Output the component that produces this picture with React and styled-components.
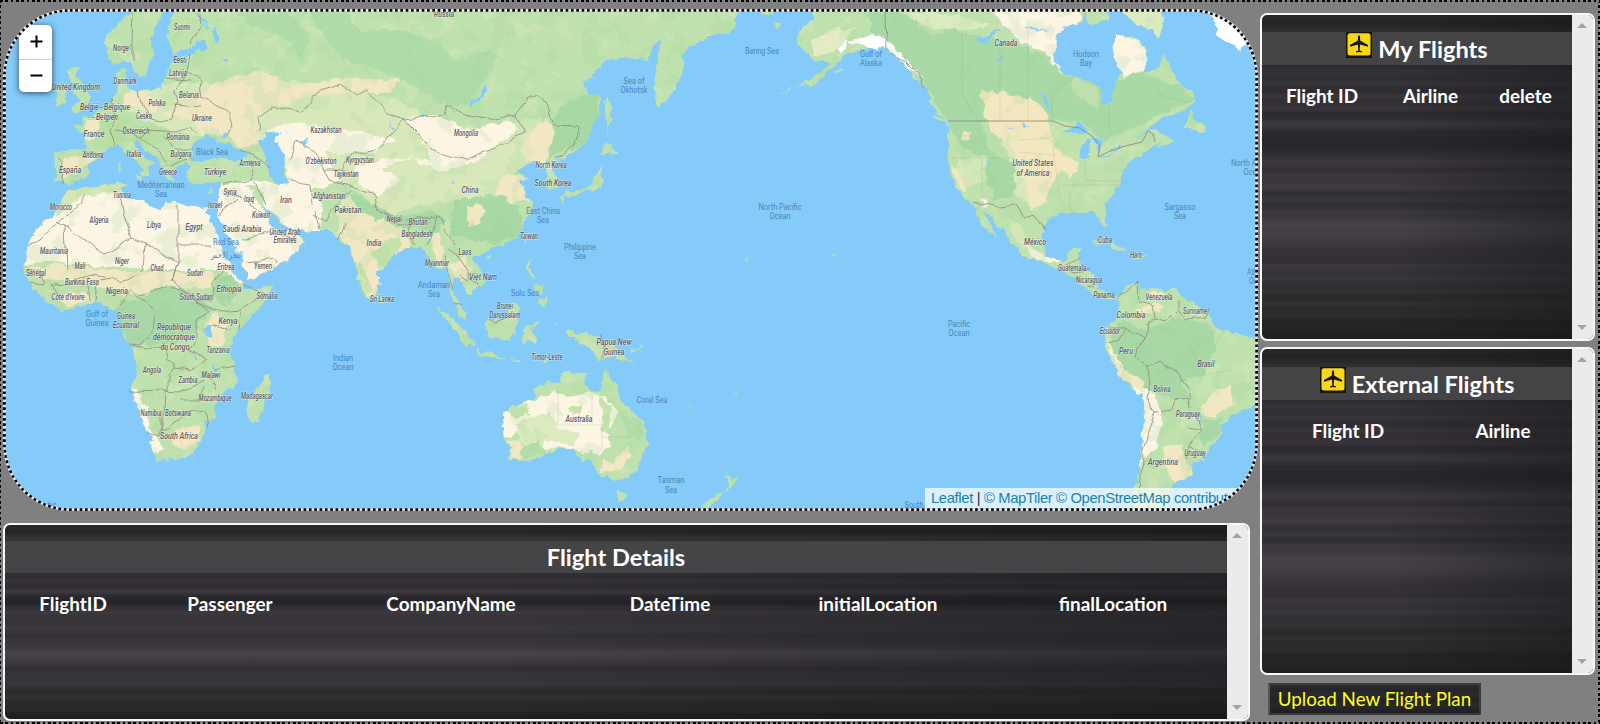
import React from "react";
import styled, { createGlobalStyle } from "styled-components";

const GlobalStyle = createGlobalStyle`
  body { margin: 0; background: #808080; overflow: hidden; }
  * { box-sizing: border-box; }
`;

const dots = (dir) => `repeating-linear-gradient(${dir}, #000 0 2.67px, #808080 2.67px 5.33px)`;

const Frame = styled.div`
  display: flex;
  width: 1600px;
  height: 724px;
  padding: 9px 5px 3px 3px;
  gap: 2px;
  font-family: Lato, "Liberation Sans", sans-serif;
  color: #fff;
  background:
    ${dots("to right")} 0 0 / 100% 2px no-repeat,
    ${dots("to right")} 0 100% / 100% 2px no-repeat,
    ${dots("to bottom")} 0 0 / 1px 100% no-repeat,
    ${dots("to bottom")} 100% 0 / 2px 100% no-repeat,
    #808080;
`;
const LeftColumn = styled.div`
  display: flex;
  flex-direction: column;
  width: 1255px;
  gap: 12px;
`;
const RightColumn = styled.div`
  display: flex;
  flex-direction: column;
  align-items: flex-start;
  width: 335px;
  padding-top: 4px;
  gap: 6px;
`;

const MapBox = styled.div`
  position: relative;
  flex: none;
  height: 502px;
  border-radius: 67px;
  overflow: hidden;
`;
const MapDrawing = styled.svg`
  display: block;
  width: 1255px;
  height: 502px;
`;
const MapEdge = styled.svg`
  position: absolute;
  inset: 0;
  width: 1255px;
  height: 502px;
  pointer-events: none;
`;
const ZoomControl = styled.div`
  position: absolute;
  left: 16px;
  top: 16px;
  width: 33px;
  border-radius: 5px;
  background: #fff;
  box-shadow: 0 1px 6px rgba(0, 0, 0, 0.65);
`;
const ZoomButton = styled.div`
  display: flex;
  align-items: center;
  justify-content: center;
  height: 33.5px;
  padding-left: 1px;
  & + & { border-top: 1px solid #ccc; }
`;
const Attribution = styled.div`
  position: absolute;
  right: 3px;
  bottom: 3px;
  height: 20px;
  padding: 0 6px;
  background: rgba(255, 255, 255, 0.7);
  font: 14.8px/20px "Liberation Sans", Arial, sans-serif;
  letter-spacing: -0.36px;
  color: #333;
  white-space: nowrap;
  width: 330px;
`;
const Credit = styled.a`color: #1a82b0;`;

const streaks = `
  linear-gradient(to right, rgba(20,20,22,0) 40%, rgba(20,20,22,0.5) 100%),
  repeating-linear-gradient(to bottom, rgba(0,0,0,0) 0, rgba(0,0,0,0.1) 7px, rgba(0,0,0,0) 12px, rgba(0,0,0,0.05) 17px, rgba(0,0,0,0) 23px),
  repeating-linear-gradient(to bottom, rgba(255,245,255,0) 0, rgba(255,245,255,0.025) 3px, rgba(255,245,255,0) 7px, rgba(255,245,255,0) 13px),
  linear-gradient(to bottom,
    #252527 0%, #29292b 4%, #363538 7%, #2b2b2d 9%, #303033 15%, #333136 20%,
    #363238 28%, #302e33 32%, #3d3940 34%, #2d2b30 36%, #27262a 41%, #3f3b41 45%,
    #343136 48%, #403c42 52%, #343137 55%, #38353b 61%, #4a464c 66%, #3d393f 70%,
    #343136 75%, #3a373d 80%, #2f2e31 85%, #2d2d30 91%, #242426 96%, #202022 100%)`;

const Panel = styled.section`
  display: flex;
  flex: none;
  width: ${(p) => p.$w}px;
  height: ${(p) => p.$h}px;
  border: 2px solid #f8f8f8;
  border-radius: 7px;
  overflow: hidden;
  background: ${streaks};
`;
const PanelBody = styled.div`
  flex: 1;
  min-width: 0;
  padding-top: ${(p) => p.$top}px;
`;
const PanelTitle = styled.h2`
  display: flex;
  justify-content: center;
  gap: 6px;
  height: ${(p) => p.$h}px;
  margin: 0;
  background: #444446;
  font-size: 23.6px;
  line-height: ${(p) => p.$lh}px;
  font-weight: 700;
`;
const HeaderRow = styled.div`
  display: grid;
  grid-template-columns: ${(p) => p.$cols};
  padding-top: 19px;
  font-size: 18.9px;
  line-height: 24px;
  font-weight: 700;
  text-align: center;
`;
const ScrollTrack = styled.div`
  display: flex;
  flex-direction: column;
  justify-content: space-between;
  width: 21px;
  padding: 8px 0 9px 5px;
  background: #ebebeb;
`;
const Arrow = styled.i`
  width: 0;
  border: 5px solid transparent;
  border-top: ${(p) => (p.$down ? "5px solid #a3a3a3" : "0")};
  border-bottom: ${(p) => (p.$down ? "0" : "5px solid #a3a3a3")};
`;
const UploadButton = styled.button`
  width: 213px;
  height: 32px;
  margin: 2px 0 0 8px;
  padding: 0;
  border: 2px solid;
  border-color: #3c3c3f #3c3c3f #39393c #55555a;
  background: linear-gradient(#2c2b2e, #252427 20%, #2c2a2e 32%, #232225 55%, #2a292c 70%, #1f1f21);
  color: #ffff1a;
  font: 400 18.8px/24px Lato, sans-serif;
  white-space: nowrap;
`;

const PlaneIcon = () => (
  <svg width="26" height="26" viewBox="0 0 26 26">
    <rect width="26" height="26" fill="#17150c" />
    <rect x="1.5" y="1.2" width="23" height="22.4" rx="2.5" fill="#f7d716" />
    <path d="M13 3.2c-.8 0-1.1 1.2-1.1 2.4v3L4 13v1.7l8-2.2.3 6-2.3 1v.9l3-.5 3 .5v-.9l-2.3-1 .3-6 8 2.2V13l-7.9-4.4v-3c0-1.2-.3-2.4-1.1-2.4z" fill="#15130a" />
  </svg>
);

/* Coastlines, clockwise from the Atlantic coast of Spain */
const LAND = [
  "55,152 56,163 55,180 62,183 66,185 80,180 88,172 90,163 101,155 108,148 118,145 127,152 137,161 144,168 142,177 147,175 149,167 155,165 148,159 140,152 134,147 133,141 139,140 145,149 155,156 161,163 164,172 168,181 175,181 173,173 178,167 187,164 190,167 185,172 188,182 200,184 212,183 221,181 219,190 217,205 219,220 228,235 240,255 246,272 246,280 255,277 275,268 290,258 300,247 305,241 298,234 292,230 282,233 273,225 265,213 263,207 270,213 280,222 292,228 300,231 318,231 332,231 340,241 348,247 353,250 354,262 358,280 364,295 370,299 376,295 379,285 379,272 388,262 398,252 410,247 420,247 427,255 431,262 435,266 442,270 446,268 449,280 450,292 452,300 458,312 466,321 466,312 459,303 455,298 452,285 454,277 460,279 467,290 471,294 480,287 485,280 480,268 473,258 480,252 488,250 500,246 515,238 525,225 531,212 530,200 522,190 520,180 528,180 522,178 517,172 525,165 535,163 545,170 548,182 549,190 556,190 557,178 551,170 558,160 570,153 580,148 592,130 598,115 602,100 600,93 590,95 582,88 595,72 605,60 630,58 648,60 655,45 661,38 657,60 655,98 660,108 668,98 676,85 685,70 683,55 690,45 705,40 722,35 736,30 735,20 742,5 175,5 168,28 168,45 175,52 185,50 203,43 195,54 185,57 173,60 165,77 163,88 150,90 133,92 126,83 126,72 120,70 116,80 118,93 110,104 100,110 90,117 82,118 83,127 72,125 84,133 86,148 72,150",
  "130,5 127,14 120,22 110,33 106,45 108,58 115,65 126,60 132,65 138,78 144,78 148,68 153,52 151,38 158,22 168,5",
  "72,64 80,68 76,75 80,80 85,92 90,100 88,108 75,114 72,108 80,100 73,92 72,85 68,72", "56,90 65,88 66,103 54,107",
  "68,190 64,196 58,205 50,217 38,226 30,240 27,250 26,265 25,275 33,287 42,298 55,307 62,311 75,308 90,304 103,303 113,311 120,312 121,325 122,335 129,341 133,346 137,365 135,378 131,388 133,400 140,412 143,425 150,437 155,452 158,461 170,459 185,458 195,448 205,435 206,424 217,416 216,402 225,392 236,385 235,368 231,352 230,345 238,330 255,314 268,297 274,283 272,285 258,289 245,290 243,284 236,276 232,270 225,255 216,232 207,215 205,210 213,207 200,208 190,206 178,203 165,202 160,210 150,207 138,200 125,198 122,190 125,183 112,182 90,187 75,188",
  "267,372 271,385 265,405 258,422 250,422 246,412 249,397 258,387",
  "435,307 446,313 460,325 473,340 474,347 466,345 455,333 447,320", "474,349 490,353 505,358 500,359 480,355",
  "487,318 495,322 505,315 512,304 520,308 518,320 515,328 510,340 500,338 490,337 485,325",
  "522,330 530,325 543,322 530,328 535,337 534,345 527,338 524,347", "527,264 532,258 530,272 537,280 528,275", "538,300 547,295 546,304 540,303", "510,359 520,360 519,362", "540,362 552,356 546,362", "534,284 538,288 545,285 543,293 537,294",
  "566,330 575,330 578,336 588,333 600,338 612,345 625,355 634,365 620,360 610,358 598,360 592,350 580,342 570,338", "630,349 638,348 642,342 641,348 633,351", "556,321 558,327 555,325",
  "502,415 512,406 532,400 535,390 550,380 560,384 562,375 570,371 580,372 586,373 583,382 590,389 600,392 604,375 607,367 612,382 617,388 620,400 632,410 642,420 646,432 646,442 640,462 634,475 622,480 610,478 600,476 596,468 588,458 582,462 575,450 560,448 545,452 535,460 520,461 508,460 510,450 503,432",
  "616,491 627,492 624,502 619,502", "719,463 726,475 737,478 730,488 725,492 728,480", "723,490 718,500 708,507 700,512 706,502",
  "606,142 612,147 620,152 612,154 606,156 600,153", "602,163 604,172 600,187 588,190 575,195 565,198 568,192 582,190 592,182 599,172", "562,196 566,198 565,205 561,202",
  "606,95 611,108 613,120 609,122 607,135 606,120 605,105", "527,233 529,236 525,243", "380,293 385,300 382,305 378,300", "484,255 491,254 489,259",
  "119,163 122,163 121,172 118,172", "134,177 143,177 142,181", "166,185 175,186 172,187", "206,191 212,189 210,192",
  "815,5 812,20 800,30 795,38 803,50 815,60 830,62 820,73 808,82 798,88 815,84 833,66 848,55 858,50 870,48 882,48 893,54 903,64 915,77 925,88 932,105 945,120 950,127 948,135 947,155 950,170 957,188 970,202 975,212 983,225 998,239 990,222 983,206 990,215 1005,235 1017,248 1025,256 1040,262 1055,267 1060,268 1072,277 1085,284 1090,293 1105,299 1117,300 1108,293 1098,289 1095,275 1080,270 1078,262 1082,248 1070,250 1065,260 1052,260 1045,250 1043,228 1048,218 1065,213 1080,212 1092,212 1100,220 1105,230 1106,218 1103,205 1115,192 1122,180 1123,168 1135,159 1143,152 1160,144 1155,149 1178,139 1168,138 1160,132 1150,130 1138,138 1150,125 1165,117 1180,112 1195,103 1194,92 1180,85 1172,72 1170,65 1164,52 1160,65 1150,73 1144,72 1146,50 1140,40 1130,35 1115,35 1114,60 1121,72 1115,85 1111,100 1105,107 1100,85 1080,78 1060,70 1053,55 1057,35 1068,25 1080,22 1090,5",
  "1085,5 1087,25 1100,22 1108,20 1102,5", "1115,5 1130,18 1150,30 1160,38 1163,30 1162,5", "932,112 943,119 949,127 938,120",
  "1193,108 1195,118 1206,128 1205,133 1190,128 1184,128", "1092,243 1105,239 1125,250 1118,251 1108,245", "1128,252 1150,257 1135,259", "743,260 747,260 745,257 742,260", "830,253 834,255 832,257",
  "1117,300 1122,290 1137,283 1142,290 1150,288 1175,290 1185,300 1200,307 1212,318 1215,328 1230,332 1245,337 1265,338 1265,392 1250,408 1235,415 1223,422 1222,432 1208,450 1203,460 1192,461 1191,470 1192,475 1180,480 1172,485 1167,500 1165,515 1131,515 1133,490 1140,470 1142,445 1144,420 1143,395 1130,388 1120,375 1112,360 1103,345 1105,335 1108,325 1118,318",
  "733,394 738,392 738,394", "687,403 695,408 691,407",
  "780,93 787,89 795,86 790,90", "800,84 808,80 806,84", "767,7 773,17 760,14", "773,24 782,26 777,28", "836,70 843,69 838,73",
];

/* [colour, outline] of terrain areas */
const TERRAIN = [
  ["#b1dcaa", "310,12 345,12 360,30 410,30 440,45 455,60 490,50 498,55 485,80 465,105 440,105 420,90 390,75 350,62 330,45 320,30"],
  ["#b1dcaa", "235,12 290,12 310,40 300,60 285,35 255,28"],
  ["#a8d9a5", "590,95 600,90 598,120 580,148 565,150 545,160 545,130 558,110 570,100"],
  ["#d8e8ba", "162,85 200,82 230,90 270,78 330,88 400,100 430,120 480,128 520,120 540,118 548,150 510,175 520,200 500,210 440,200 390,215 340,180 300,150 262,142 230,135 200,135 165,130 125,110 130,92"],
  ["#f1e7c3", "175,98 205,92 225,78 255,72 280,76 275,90 310,85 340,78 400,80 390,95 350,92 320,95 262,108 258,130 262,145 240,148 228,135 200,135 195,120 165,115"],
  ["#f1e7c3", "125,95 140,92 160,100 155,112 140,108 125,105"],
  ["#f1e7c3", "85,122 105,115 108,125 95,140 85,140"], ["#f1e7c3", "60,160 80,154 95,160 80,172 62,178"],
  ["#b8dfa4", "100,120 120,118 148,125 170,130 165,142 145,148 125,140 105,150 95,145"],
  ["#fcf5e3", "268,130 290,122 330,128 365,132 395,140 375,150 340,155 325,150 330,165 345,180 310,190 322,205 320,232 290,228 265,207 262,190 240,182 250,180 280,185 290,180 285,165 278,152"],
  ["#fcf5e3", "219,185 245,182 262,208 285,230 308,240 300,256 270,270 247,282 238,262 217,225 218,200"],
  ["#fcf5e3", "405,118 440,116 470,130 510,120 520,130 495,145 480,160 440,172 410,158 380,168 400,180 380,195 360,185 355,168 385,158 430,160 425,145"],
  ["#f1e7c3", "535,130 548,118 555,135 545,160 555,168 540,170 520,150"],
  ["#f1e7c3", "505,175 530,175 530,200 500,205 495,190"],
  ["#f1e7c3", "336,205 350,195 375,210 405,230 410,247 385,260 378,295 366,295 355,260 340,238"],
  ["#c5e3aa", "385,240 400,235 400,248 380,270 372,255"], ["#c5e3aa", "365,290 358,265 361,262 372,290"],
  ["#a8d8a5", "348,190 370,203 400,218 430,210 445,220 438,235 425,230 395,227 360,210"],
  ["#a8d8a5", "455,200 500,195 525,215 520,235 495,245 470,240 450,235 452,215"],
  ["#f1e7c3", "466,207 482,204 486,210 477,224 467,225"], ["#f1e7c3", "450,265 465,258 472,270 462,280 453,275"],
  ["#f1e7c3", "430,235 440,232 442,260 436,265"],
  ["#fcf5e3", "20,265 30,230 60,205 90,190 125,180 140,197 165,200 215,205 230,250 242,270 240,285 225,270 170,270 100,266 50,262"],
  ["#d5e7b6", "60,192 85,187 125,182 125,190 100,195 80,197 65,212 55,215"],
  ["#f1e7c3", "30,268 60,265 110,270 180,273 212,272 210,288 170,290 130,295 98,288 60,280 35,278"],
  ["#f1e7c3", "45,290 60,295 85,292 95,300 65,306"],
  ["#a8d8a5", "115,320 120,300 140,300 150,290 175,285 200,300 215,310 200,320 195,335 165,345 130,345 122,330"],
  ["#a8d8a5", "215,275 232,275 240,290 225,305 212,295"],
  ["#f1e7c3", "205,325 215,313 228,325 222,345 208,345"],
  ["#fcf5e3", "128,388 140,392 147,410 150,430 165,450 155,452 144,430 132,402"], ["#f1e7c3", "175,430 200,425 200,440 185,450 170,445"],
  ["#fcf5e3", "500,415 518,405 540,397 555,393 575,396 590,392 606,400 617,412 615,425 605,430 610,445 603,455 590,450 580,452 560,446 540,452 535,440 515,432 505,440"],
  ["#dcebbf", "515,425 535,415 548,412 560,430 580,432 575,445 550,440 535,455 520,440"], ["#c4e4ab", "508,408 528,404 530,415 515,417"],
  ["#c4e4ab", "568,408 582,404 582,414 572,416"], ["#c4e4ab", "598,395 612,410 608,430 600,430 603,415"],
  ["#f1e7c3", "508,442 520,440 523,458 512,461"], ["#f1e7c3", "612,462 628,445 630,455 620,470 600,472 602,462"],
  ["#b3dda8", "520,448 540,440 545,452 525,460"], ["#b3dda8", "620,415 640,420 644,440 630,435"],
  ["#a9d9a7", "870,12 900,12 950,30 1000,40 1045,55 1060,72 1100,85 1120,80 1140,72 1180,85 1195,100 1150,120 1105,140 1080,122 1045,120 1000,90 985,95 985,125 950,125 920,80 895,50 870,30"],
  ["#bfe0ac", "905,12 945,12 945,35 930,35"], ["#bfe0ac", "1078,78 1098,88 1100,108 1082,100 1070,85"],
  ["#fcf5e3", "985,5 1075,5 1080,20 1060,38 1058,55 1062,73 1045,52 1020,42 1010,30"], ["#fcf5e3", "1110,32 1145,42 1148,70 1125,75 1113,60"],
  ["#dcebbf", "1112,5 1165,5 1165,40 1130,20"], ["#dcebbf", "900,12 945,12 990,25 970,30 930,28"],
  ["#f3e7bf", "981,90 1005,92 1030,98 1045,112 1050,125 1055,145 1080,165 1072,178 1060,170 1045,200 1030,210 1025,190 1015,170 1008,145 990,130 984,110"],
  ["#d8e8ba", "1000,140 1010,135 1020,170 1030,205 1018,195 1012,165"],
  ["#c5e4ad", "1055,120 1080,128 1085,140 1110,150 1100,165 1080,160 1062,155"],
  ["#a8d8a5", "950,125 980,125 990,150 1015,165 1015,195 995,200 985,175 990,160 970,150 955,140"],
  ["#d3e8b6", "958,158 985,158 985,180 960,190 955,178"], ["#f1e7c3", "952,165 957,168 966,188 962,190"],
  ["#f1e7c3", "963,132 972,132 970,140 962,140"], ["#fcf5e3", "980,197 987,204 984,208"],
  ["#fff", "845,42 860,38 875,35 890,42 905,58 925,80 918,75 895,58 880,50"], ["#fff", "838,48 846,40 848,46 840,56"],
  ["#e5ecc5", "810,40 830,30 855,28 845,40 830,55 815,55"],
  ["#d3e8b6", "1005,215 1025,230 1030,245 1045,258 1040,262 1018,245"], ["#fcf5e3", "1020,240 1045,255 1062,260 1055,264 1035,258"],
  ["#a8d8a5", "1118,320 1145,330 1175,318 1210,325 1215,345 1205,375 1180,380 1190,400 1165,398 1145,390 1125,375 1110,345"],
  ["#fcf5e3", "1103,340 1112,348 1125,372 1145,385 1155,400 1160,420 1152,450 1145,460 1140,470 1142,400"], ["#f1e7c3", "1105,338 1120,368 1145,380 1145,393 1120,380"],
  ["#f1e7c3", "1135,310 1155,302 1165,308 1140,315"], ["#f1e7c3", "1145,293 1170,293 1165,300 1150,300"],
  ["#f1e7c3", "1215,390 1232,385 1232,405 1215,415 1200,415 1205,402"], ["#f1e7c3", "1165,445 1180,445 1185,460 1192,475 1175,482 1165,468"],
  ["#a8d8a5", "1205,420 1222,418 1220,432 1205,445 1198,435"],
  ["#fcf5e3", "1155,400 1162,410 1160,430 1156,450 1148,455 1150,430"],
];

const WATER = [
  "193,150 197,141 205,136 213,138 216,144 222,142 230,142 240,150 248,157 235,161 215,158 200,162 192,160",
  "220,137 229,130 226,137", "259,140 270,132 280,133 276,142 285,155 284,170 290,183 278,186 268,172 265,155",
  "199,12 200,20 209,30 205,20", "195,40 207,42 207,50 200,50", "212,28 218,32 219,42 214,40", "224,58 229,60 228,65",
  "300,142 308,139 307,146 303,144", "486,82 488,88 480,100 470,107 468,105 480,95", "424,113 427,116 423,117", "391,122 394,128 392,129", "365,155 374,155 368,157", "452,181 455,184 451,183", "453,107 455,110 453,112",
  "204,327 212,326 212,336 205,337", "193,352 196,358 194,362", "212,362 215,370 213,378", "600,440 603,441",
  "1065,133 1078,122 1088,130 1080,134 1070,134", "1082,142 1092,137 1090,150 1087,160 1079,157", "1092,137 1104,140 1102,148 1098,153", "1097,158 1112,152 1110,155", "1108,150 1122,146 1120,149",
  "1040,92 1045,98 1050,110 1044,106", "975,40 995,32 1003,28 985,43", "1025,25 1040,30 1050,28 1038,33", "995,60 1007,56 1003,61", "1007,127 1014,128 1012,130", "1022,125 1030,128 1024,128", "985,158 991,162 987,166",
  "1138,281 1141,289 1138,293", "1144,384 1148,386 1147,389", "1200,415 1203,420 1201,424",
];

const FRONTIERS = [
  "58,158 63,162 62,182", "82,151 105,157", "112,98 115,118 110,130 115,145", "138,90 142,108 150,118 170,122 176,105 173,90", "115,130 140,138 150,130 175,132 190,128 195,135", "140,138 158,152 165,160", "165,138 175,148 192,148", "163,165 178,162 190,160", "133,12 132,40 132,62", "197,12 202,25 190,46", "190,55 187,70 200,82 202,98 230,112 234,125 228,133", "165,78 190,80", "174,105 200,107", "172,93 180,85 187,72",
  "240,150 262,160 270,168", "250,160 253,180 240,182 222,183", "222,190 240,195 232,203 217,215", "240,195 250,205 265,213", "255,182 265,205", "242,240 270,232 292,240 300,230", "246,262 275,258 280,262", "315,210 318,232", "291,182 310,185 312,205", "260,130 258,118 275,106 300,112 312,105 312,95 340,84 355,95 368,90 388,115 405,120 392,132 380,148 350,155 342,170 325,170 315,150 295,140 290,160", "325,170 330,180 345,185 375,195 378,210 400,220 440,215 448,235 455,245", "405,120 445,115 448,104 465,115 490,120 515,115 528,98 540,95 550,110 555,125 578,126 575,145 555,158", "405,120 420,135 430,150 465,160 495,148 525,132 515,115", "312,215 325,220 335,205 350,192", "345,225 338,240", "375,205 400,225 410,225 408,235 415,245", "438,215 430,235 428,245", "448,250 460,258 470,275 478,288", "445,256 450,280 453,290", "460,275 470,280",
  "82,192 82,205 57,222 40,240 27,247", "57,222 65,225 105,255 132,238 124,215 120,195", "65,225 67,270", "132,238 145,243 178,262 178,205", "178,245 210,245", "145,243 143,270 120,285 110,278 100,280", "178,262 173,278 180,288 195,300 212,300 215,290 210,285 222,270", "178,262 172,280", "27,270 40,270 45,285 30,283", "55,285 75,282 90,275 105,277", "53,285 60,300", "88,284 90,303", "97,280 95,303", "120,305 130,290 143,300 155,310", "140,296 165,288 180,290 210,312 195,320 195,340 190,350 205,358 190,370 175,368 175,362 167,360 165,350 133,346", "155,310 152,330 140,345 129,344", "195,302 220,312 240,310 238,330", "240,310 265,293 243,285", "131,390 165,391 180,392 205,380", "165,391 164,410 160,428 168,428 190,412 205,410 207,430", "175,368 168,375 168,392", "205,385 200,400 180,400", "205,372 215,385 217,390", "148,433 160,436 160,415", "215,370 235,366", "230,330 212,325",
  "487,320 497,323 505,320 508,312", "602,335 602,360", "455,302 462,305",
  "885,12 886,50 895,58 905,60 915,70 925,88", "973,202 1000,207 1015,205 1025,217 1035,214 1045,230", "1063,268 1075,260 1078,258", "1070,272 1090,270", "1088,286 1095,288",
  "1117,300 1137,283 1138,302 1153,305 1155,320 1147,322 1145,340 1135,348 1133,358 1148,367 1150,385 1145,398 1155,412 1172,410 1175,400 1188,398 1190,410", "1155,320 1165,323 1178,310 1178,298", "1178,310 1185,320 1205,318 1210,308", "1110,328 1125,328 1120,340 1108,343", "1125,328 1145,340", "1148,367 1162,363 1180,375 1188,388 1190,400", "1188,415 1202,420 1200,430 1188,428", "1202,430 1190,445 1205,455", "1155,412 1148,435 1142,460 1140,490 1137,512", "1190,445 1186,460",
];
const STATES = [
  "962,30 962,95 978,121", "1000,50 1000,121", "1028,20 1028,121", "1052,120 1052,95 1075,75", "1109,105 1109,130 1115,140", "1155,85 1160,95 1190,103", "950,158 990,158 1018,158", "982,158 982,200", "1018,140 1050,138", "1018,152 1055,155", "1020,172 1052,172", "1052,140 1060,200", "1085,160 1085,180 1130,182", "1060,185 1120,185", "1070,190 1070,212", "558,390 558,425 590,425", "592,390 592,425 602,425 602,470", "602,437 632,437", "1215,345 1225,330", "1190,345 1205,375 1230,370",
];

/* [text, centre x, centre y, width] */
const COUNTRIES = [
  ["Russia", 444, 14, 20], ["Norge", 121, 48, 16], ["Suomi", 182, 27, 16], ["Eesti", 180, 60, 13], ["Latvija", 178, 73, 18], ["Danmark", 125, 81, 23], ["United Kingdom", 76, 87, 48], ["Polska", 157, 103, 17], ["Belarus", 189, 95, 20], ["België - Belgique", 105, 107, 50], ["- Belgien", 105, 117, 26], ["Česko", 144, 116, 16], ["Ukraine", 202, 118, 20], ["France", 94, 134, 21], ["Österreich", 136, 131, 27], ["România", 178, 137, 23], ["Andorra", 93, 155, 21], ["Italia", 134, 154, 15], ["Bulgaria", 181, 154, 21], ["España", 70, 170, 22], ["Greece", 168, 172, 18], ["Türkiye", 215, 172, 22], ["Armenia", 250, 163, 21], ["Tunisia", 122, 195, 18], ["Morocco", 61, 207, 22], ["Syria", 230, 192, 13], ["Iraq", 249, 199, 10], ["Iran", 286, 200, 12], ["Israel", 215, 205, 14], ["Kuwait", 261, 215, 18], ["Algeria", 99, 220, 19], ["Libya", 154, 225, 14], ["Egypt", 194, 227, 17], ["Saudi Arabia", 242, 229, 39], ["United Arab", 285, 232, 31], ["Emirates", 285, 240, 23], ["Mauritania", 54, 251, 28],
  ["Mali", 80, 266, 11], ["Niger", 122, 261, 14], ["Chad", 157, 268, 13], ["Sudan", 195, 273, 16], ["Eritrea", 226, 267, 17], ["Yemen", 263, 266, 18], ["Sénégal", 36, 273, 20], ["Burkina Faso", 82, 282, 34], ["Nigeria", 117, 291, 22], ["Côte d'Ivoire", 68, 297, 33], ["Ethiopia", 229, 289, 25], ["South Sudan", 196, 297, 33], ["Somalia", 267, 296, 21], ["Guinea", 126, 316, 18], ["Ecuatorial", 126, 325, 26], ["République", 174, 327, 34], ["démocratique", 174, 337, 42], ["du Congo", 175, 347, 29], ["Kenya", 228, 321, 19], ["Tanzania", 218, 350, 23], ["Angola", 152, 370, 18], ["Zambia", 188, 380, 19], ["Malawi", 211, 375, 19], ["Mozambique", 215, 398, 33], ["Madagascar", 257, 396, 32], ["Namibia", 151, 413, 21], ["Botswana", 178, 413, 26], ["South Africa", 179, 436, 38],
  ["Kazakhstan", 326, 130, 31], ["Mongolia", 466, 133, 24], ["O'zbekiston", 321, 161, 31], ["Kyrgyzstan", 360, 160, 28], ["Tajikistan", 346, 174, 25], ["Afghanistan", 329, 196, 32], ["Pakistan", 348, 210, 27], ["China", 470, 190, 17], ["North Korea", 551, 165, 31], ["South Korea", 553, 183, 37], ["Nepal", 394, 219, 15], ["Bhutan", 418, 222, 19], ["Bangladesh", 417, 234, 31], ["India", 374, 243, 15], ["Laos", 465, 252, 13], ["Myanmar", 437, 263, 24], ["Taiwan", 529, 236, 18], ["Việt Nam", 483, 277, 28], ["Sri Lanka", 382, 299, 24], ["Brunei", 505, 306, 16], ["Darussalam", 505, 315, 31], ["Timor-Leste", 547, 357, 31], ["Papua New", 614, 342, 35], ["Guinea", 614, 352, 21], ["Australia", 579, 419, 27],
  ["Canada", 1006, 43, 23], ["United States", 1033, 163, 41], ["of America", 1033, 173, 33], ["México", 1035, 242, 22], ["Cuba", 1105, 240, 14], ["Haiti", 1136, 255, 12], ["Guatemala", 1072, 268, 28], ["Nicaragua", 1089, 280, 26], ["Panama", 1104, 295, 21], ["Venezuela", 1159, 297, 27], ["Suriname", 1195, 311, 24], ["Colombia", 1131, 315, 29], ["Ecuador", 1110, 331, 20], ["Perú", 1126, 351, 14], ["Brasil", 1206, 364, 17], ["Bolivia", 1162, 389, 17], ["Paraguay", 1188, 414, 24], ["Uruguay", 1195, 453, 21], ["Argentina", 1163, 462, 30],
];
const SEAS = [
  ["Black Sea", 212, 152, 32], ["Mediterranean", 161, 185, 47], ["Sea", 161, 194, 12], ["Red Sea", 226, 242, 26], ["البحر الأحمر", 227, 255, 32], ["Gulf of", 97, 314, 22], ["Guinea", 97, 323, 23], ["Indian", 343, 358, 20], ["Ocean", 343, 367, 21], ["Sea of", 634, 81, 21], ["Okhotsk", 634, 90, 27], ["East China", 543, 211, 34], ["Sea", 543, 220, 12], ["Philippine", 580, 247, 32], ["Sea", 580, 256, 12], ["Andaman", 434, 285, 32], ["Sea", 434, 294, 12], ["Sulu Sea", 525, 293, 28], ["Coral Sea", 652, 400, 31], ["Tasman", 671, 480, 27], ["Sea", 671, 490, 12], ["Bering Sea", 762, 51, 34], ["Gulf of", 871, 54, 22], ["Alaska", 871, 63, 22], ["Hudson", 1086, 54, 26], ["Bay", 1086, 63, 12], ["North Pacific", 780, 207, 43], ["Ocean", 780, 216, 21], ["Sargasso", 1180, 207, 31], ["Sea", 1180, 216, 12], ["North Atlantic", 1254, 163, 46], ["Ocean", 1254, 172, 21], ["Pacific", 959, 324, 22], ["Ocean", 959, 333, 21], ["Atlantic", 1259, 272, 24], ["Ocean", 1259, 281, 20], ["South", 914, 505, 19], ["tic", 52, 505, 9],
];

const poly = (list, props) => list.map((p, i) => <polygon key={i} points={p} {...props} />);
const lines = (list, props) => list.map((p, i) => <polyline key={i} points={p} fill="none" {...props} />);
const MapLabels = ({ items, ...style }) => (
  <g textAnchor="middle" fontFamily="Roboto, 'Noto Sans', sans-serif" paintOrder="stroke" {...style}>
    {items.map(([t, x, y, w], i) => (
      <text key={i} x={x} y={y + 3.2} textLength={w} lengthAdjust="spacingAndGlyphs">{t}</text>
    ))}
  </g>
);

const WorldMap = () => (
  <MapDrawing viewBox="3 9 1255 502">
    <defs>
      <filter id="rough" x="-10" y="0" width="1290" height="530" filterUnits="userSpaceOnUse" colorInterpolationFilters="sRGB">
        <feTurbulence type="fractalNoise" baseFrequency="0.1" numOctaves="3" seed="4" />
        <feDisplacementMap in="SourceGraphic" scale="9" xChannelSelector="R" yChannelSelector="G" />
      </filter>
      <filter id="wavy" x="-10" y="0" width="1290" height="530" filterUnits="userSpaceOnUse" colorInterpolationFilters="sRGB">
        <feTurbulence type="fractalNoise" baseFrequency="0.07" numOctaves="1" seed="4" />
        <feDisplacementMap in="SourceGraphic" scale="9" xChannelSelector="R" yChannelSelector="G" />
      </filter>
      <filter id="mottleDark" x="0" y="0" width="1270" height="520" filterUnits="userSpaceOnUse" colorInterpolationFilters="sRGB">
        <feTurbulence type="fractalNoise" baseFrequency="0.045" numOctaves="4" seed="8" />
        <feColorMatrix values="0 0 0 0 .62  0 0 0 0 .83  0 0 0 0 .6  12 0 0 0 -6.5" />
      </filter>
      <filter id="mottleLight" x="0" y="0" width="1270" height="520" filterUnits="userSpaceOnUse" colorInterpolationFilters="sRGB">
        <feTurbulence type="fractalNoise" baseFrequency="0.05" numOctaves="4" seed="21" />
        <feColorMatrix values="0 0 0 0 .87  0 0 0 0 .92  0 0 0 0 .74  12 0 0 0 -7.1" />
      </filter>
      <clipPath id="land">{poly(LAND)}</clipPath>
    </defs>
    <rect x="0" y="0" width="1270" height="520" fill="#84cbf9" />
    <g filter="url(#rough)">
      <g clipPath="url(#land)">
        <rect x="0" y="0" width="1270" height="520" fill="#bfe1ae" />
        <rect x="0" y="0" width="1270" height="520" filter="url(#mottleLight)" opacity=".35" />
        {TERRAIN.map(([c, p], i) => <polygon key={i} points={p} fill={c} />)}
        <rect x="0" y="0" width="1270" height="520" filter="url(#mottleDark)" opacity=".18" />
      </g>
      <polygon points="1207,5 1214,25 1220,38 1232,46 1242,51 1245,45 1262,40 1262,5" fill="#fff" />
      {poly(WATER, { fill: "#84cbf9" })}
    </g>
    {lines(STATES, { stroke: "#8c9b82", strokeWidth: 0.5, opacity: 0.4 })}
    <g filter="url(#wavy)">{lines(FRONTIERS, { stroke: "#8b8b7e", strokeWidth: 0.8 })}</g>
    <polyline points="948,121 1053,121 1065,126 1080,128 1092,136 1100,146 1098,157 1110,151 1125,146 1142,142 1148,131 1153,134 1155,142" fill="none" stroke="#858577" strokeWidth=".8" />
    <MapLabels items={SEAS} fontSize="8.7" fill="#4b86b8" />
    <MapLabels items={COUNTRIES} fontSize="8.8" fontStyle="italic" fontWeight="500" fill="#5c5b66" stroke="rgba(255,255,255,.55)" strokeWidth="1.2" />
  </MapDrawing>
);

const Scrollbar = () => (
  <ScrollTrack><Arrow /><Arrow $down /></ScrollTrack>
);

const FlightPanel = ({ title, icon, columns, cols, w, h, top, titleHeight, titleLine }) => (
  <Panel $w={w} $h={h}>
    <PanelBody $top={top}>
      <PanelTitle $h={titleHeight} $lh={titleLine}>{icon && <PlaneIcon />}{title}</PanelTitle>
      <HeaderRow $cols={cols}>{columns.map((c) => <span key={c}>{c}</span>)}</HeaderRow>
    </PanelBody>
    <Scrollbar />
  </Panel>
);

export default function App() {
  return (
    <>
      <GlobalStyle />
      <Frame>
        <LeftColumn>
          <MapBox>
            <WorldMap />
            <ZoomControl>
              <ZoomButton><svg width="13" height="13"><path d="M6.5 .5v12M.5 6.5h12" stroke="#000" strokeWidth="2" /></svg></ZoomButton>
              <ZoomButton><svg width="13" height="13"><path d="M.5 6.5h12" stroke="#000" strokeWidth="2" /></svg></ZoomButton>
            </ZoomControl>
            <Attribution>
              <Credit>Leaflet</Credit> | <Credit>© MapTiler</Credit> <Credit>© OpenStreetMap contributors</Credit>
            </Attribution>
            <MapEdge>
              <rect x="1.4" y="1.4" width="1252.2" height="499.2" rx="65.5" fill="none" stroke="#e4e4e4" strokeWidth="2.7" />
              <rect x="1.4" y="1.4" width="1252.2" height="499.2" rx="65.5" fill="none" stroke="#000" strokeWidth="2.7" strokeDasharray="2.67 2.66" />
            </MapEdge>
          </MapBox>
          <FlightPanel title="Flight Details" w={1247} h={198} top={16} titleHeight={32} titleLine={33}
            cols="136px 178px 264px 174px 242px 228px"
            columns={["FlightID", "Passenger", "CompanyName", "DateTime", "initialLocation", "finalLocation"]} />
        </LeftColumn>
        <RightColumn>
          <FlightPanel title="My Flights" icon w={335} h={328} top={17} titleHeight={33} titleLine={35}
            cols="120px 97px 93px" columns={["Flight ID", "Airline", "delete"]} />
          <FlightPanel title="External Flights" icon w={335} h={328} top={18} titleHeight={33} titleLine={35}
            cols="172px 138px" columns={["Flight ID", "Airline"]} />
          <UploadButton>Upload New Flight Plan</UploadButton>
        </RightColumn>
      </Frame>
    </>
  );
}
